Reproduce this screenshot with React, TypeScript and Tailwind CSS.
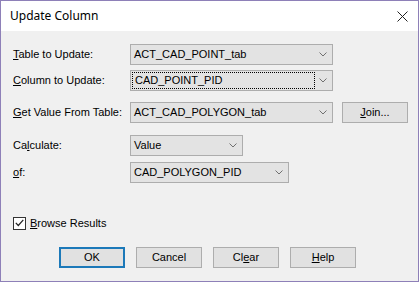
import React from "react";

const font = { fontFamily: '"Liberation Sans", Arial, sans-serif' };

function Chevron() {
  return (
    <svg width="8" height="5" viewBox="0 0 8 5" className="shrink-0">
      <path d="M0.5 0.5 L4 4 L7.5 0.5" fill="none" stroke="#707070" strokeWidth="1" />
    </svg>
  );
}

function Combo({ value, width, focused }: { value: string; width: string; focused?: boolean }) {
  return (
    <div className={`flex h-[21px] items-center border border-[#adadad] bg-[#e3e3e3] ${width}`}>
      {focused ? (
        <div className="ml-[1px] flex h-[17px] flex-1 items-center border border-dotted border-black pl-[2px]">{value}</div>
      ) : (
        <div className="flex-1 pl-[3px]">{value}</div>
      )}
      <div className="flex w-[17px] justify-center pr-[1px]">
        <Chevron />
      </div>
    </div>
  );
}

function Btn({ children, primary, className = "" }: { children: React.ReactNode; primary?: boolean; className?: string }) {
  return (
    <button
      className={`flex h-[21px] w-[66px] items-center justify-center bg-[#e1e1e1] text-[11px] text-black ${
        primary ? "border-2 border-[#1c79b9]" : "border border-[#adadad]"
      } ${className}`}
    >
      {children}
    </button>
  );
}

function Row({ label, children, className = "" }: { label: React.ReactNode; children: React.ReactNode; className?: string }) {
  return (
    <div className={`flex items-center ${className}`}>
      <div className="w-[117px]">{label}</div>
      {children}
    </div>
  );
}

export default function App() {
  return (
    <div className="h-[282px] w-[419px] border border-[#8e80b8] bg-[#f0f0f0] text-[11px] text-black" style={font}>
      <div className="flex h-[30px] items-center justify-between bg-white pl-[9px] pr-[10px]">
        <span className="text-[12px]" style={{ fontFamily: '"Noto Sans", "Open Sans", sans-serif' }}>
          Update Column
        </span>
        <svg width="11" height="11" viewBox="0 0 11 11">
          <path d="M0.5 0.5 L10.5 10.5 M10.5 0.5 L0.5 10.5" stroke="#222" strokeWidth="1" />
        </svg>
      </div>

      <div className="flex flex-col pl-[12px]">
        <Row className="mt-[13px]" label={<><u>T</u>able to Update:</>}>
          <Combo value="ACT_CAD_POINT_tab" width="w-[203px]" />
        </Row>
        <Row className="mt-[5px]" label={<><u>C</u>olumn to Update:</>}>
          <Combo value="CAD_POINT_PID" width="w-[203px]" focused />
        </Row>
        <Row className="mt-[11px]" label={<><u>G</u>et Value From Table:</>}>
          <Combo value="ACT_CAD_POLYGON_tab" width="w-[203px]" />
          <Btn className="ml-[9px] w-[65px]">
            <span><u>J</u>oin...</span>
          </Btn>
        </Row>
        <Row className="mt-[12px]" label={<>Ca<u>l</u>culate:</>}>
          <Combo value="Value" width="w-[113px]" />
        </Row>
        <Row className="mt-[6px]" label={<><u>o</u>f:</>}>
          <Combo value="CAD_POLYGON_PID" width="w-[159px]" />
        </Row>

        <div className="mt-[32px] flex items-center">
          <div className="flex h-[13px] w-[13px] items-center justify-center border border-[#333] bg-white">
            <svg width="9" height="8" viewBox="0 0 9 8">
              <path d="M0.8 3.8 L3.3 6.5 L8.3 0.8" fill="none" stroke="#222" strokeWidth="1.2" />
            </svg>
          </div>
          <span className="ml-[4px]">
            <u>B</u>rowse Results
          </span>
        </div>

        <div className="mt-[15px] flex gap-[11px] pl-[46px]">
          <Btn primary>OK</Btn>
          <Btn>Cancel</Btn>
          <Btn>
            <span>Cl<u>e</u>ar</span>
          </Btn>
          <Btn>
            <span><u>H</u>elp</span>
          </Btn>
        </div>
      </div>
    </div>
  );
}
